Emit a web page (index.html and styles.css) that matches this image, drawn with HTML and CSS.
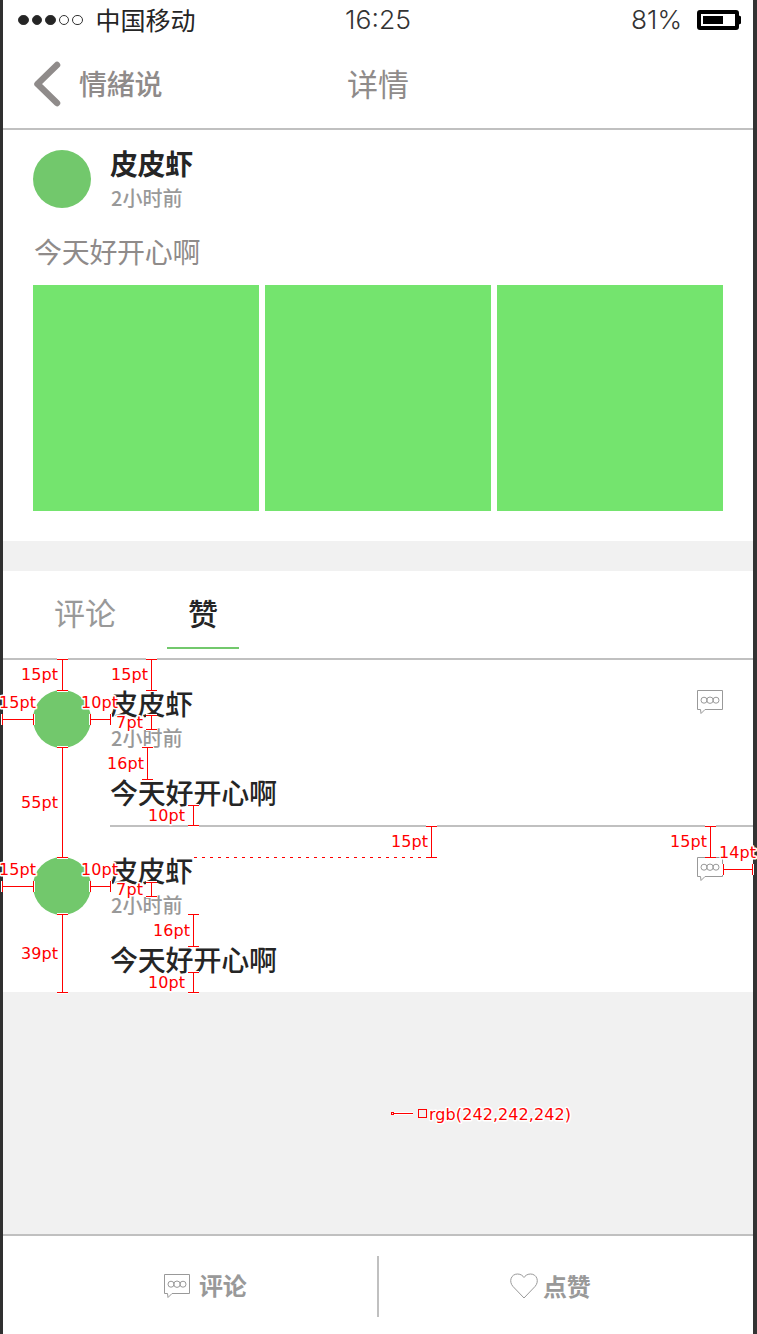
FILE: index.html
```html
<!DOCTYPE html>
<html lang="zh-CN">
<head>
<meta charset="utf-8">
<title>详情</title>
<link rel="stylesheet" href="styles.css">
</head>
<body>
<svg class="defs" aria-hidden="true">
  <defs>
    <symbol id="chat" viewBox="0 0 28 26">
      <path d="M1.500 1.500H26.500V20.500H9L5 24.500L4.500 20.500H1.500Z" fill="none" stroke="currentColor"/>
      <g fill="none" stroke="currentColor"><circle cx="8" cy="11.200" r="3"/><circle cx="14" cy="11.200" r="3.200"/><circle cx="20" cy="11.200" r="3"/></g>
    </symbol>
  </defs>
</svg>
<div class="phone">
  <header class="status">
    <div class="signal"><i class="on"></i><i class="on"></i><i class="on"></i><i></i><i></i><span class="carrier">中国移动</span></div>
    <div class="clock"><svg width="68" height="40"><text x="1" y="29" textLength="66" lengthAdjust="spacingAndGlyphs">16:25</text></svg></div>
    <div class="power">
      <svg width="52" height="40"><text x="0" y="29" textLength="51" lengthAdjust="spacingAndGlyphs">81%</text></svg>
      <svg class="battery" width="44" height="20"><rect x="2" y="2" width="38" height="16" rx="1" fill="#fff" stroke="#000" stroke-width="4"/><path d="M40 4.500L44 6.500V13.500L40 15.500Z"/><rect x="6" y="6" width="20" height="8"/></svg>
    </div>
  </header>
  <nav class="nav">
    <div class="back"><svg width="28" height="46"><path d="M24 4L4.500 23L24 42" fill="none" stroke="currentColor" stroke-width="6.500" stroke-linecap="round" stroke-linejoin="round"/></svg><span>情緒说</span></div>
    <h1>详情</h1>
  </nav>
  <section class="post">
    <div class="author">
      <div class="avatar"></div>
      <div class="meta"><div class="name strong">皮皮虾</div><div class="time">2小时前</div></div>
    </div>
    <p class="body">今天好开心啊</p>
    <div class="photos"><div></div><div></div><div></div></div>
  </section>
  <div class="tabs"><div class="tab">评论</div><div class="tab active">赞</div></div>
  <section class="list">
    <article class="item">
      <div class="avatar"></div>
      <div class="content">
        <div class="meta"><div class="name">皮皮虾</div><div class="time">2小时前</div></div>
        <p class="text">今天好开心啊</p>
        <svg class="reply" width="28" height="26"><use href="#chat"/></svg>
      </div>
    </article>
    <article class="item">
      <div class="avatar"></div>
      <div class="content">
        <div class="meta"><div class="name">皮皮虾</div><div class="time">2小时前</div></div>
        <p class="text">今天好开心啊</p>
        <svg class="reply" width="28" height="26"><use href="#chat"/></svg>
      </div>
    </article>
  </section>
  <footer class="footer">
    <div class="action"><svg width="28" height="26"><use href="#chat"/></svg><span>评论</span></div>
    <div class="divider"></div>
    <div class="action like"><svg width="28" height="26"><path d="M14 25L3 13.500C-1.500 8.500 1 1 7.500 1C11 1 13 3 14 4.500C15 3 17 1 20.500 1C27 1 29.500 8.500 25 13.500Z" fill="none" stroke="currentColor"/></svg><span>点赞</span></div>
  </footer>
</div>
<svg class="specs" width="757" height="1334">
  <defs>
    <path id="rules" d="M57 659.500H68M62.500 659V690M57 690.500H68M146 659.500H157M151.500 659V690M146 690.500H157
      M2.500 714V725M2 719.500H34M33.500 714V725M90.500 714V725M90 719.500H111M110.500 714V725
      M146 715.500H157M151.500 715V730M146 729.500H157
      M57 747.500H68M62.500 747V857M57 857.500H68M142 747.500H153M147.500 747V779M142 779.500H153
      M188 805.500H199M193.500 805V825M188 825.500H199
      M426 826.500H437M431.500 826V857M426 857.500H437M705 826.500H716M710.500 826V857M705 857.500H716
      M723.500 864V875M723 869.500H753M752.500 864V875
      M2.500 881V892M2 886.500H34M33.500 881V892M90.500 881V892M90 886.500H111M110.500 881V892
      M146 882.500H157M151.500 882V897M146 896.500H157
      M57 914.500H68M62.500 914V992M57 992.500H68M188 914.500H199M193.500 914V946M188 946.500H199
      M188 972.500H199M193.500 972V992M188 992.500H199M393 1113.500H413"/>
  </defs>
  <use href="#rules" class="halo"/>
  <use href="#rules" class="rule"/>
  <path class="dash" d="M194 857.500H427"/>
  <rect class="box" x="391.500" y="1112.500" width="2" height="2"/>
  <rect class="box" x="418.500" y="1109.500" width="8" height="8"/>
  <g class="labels">
    <text x="21" y="680" textLength="37">15pt</text><text x="111" y="680" textLength="37">15pt</text>
    <text x="-1" y="708" textLength="37">15pt</text><text x="81" y="708" textLength="37">10pt</text>
    <text x="116" y="728" textLength="27">7pt</text><text x="107" y="769" textLength="37">16pt</text>
    <text x="21" y="808" textLength="37">55pt</text><text x="148" y="821" textLength="37">10pt</text>
    <text x="391" y="847" textLength="37">15pt</text><text x="670" y="847" textLength="37">15pt</text>
    <text x="719" y="858" textLength="37">14pt</text>
    <text x="-1" y="875" textLength="37">15pt</text><text x="81" y="875" textLength="37">10pt</text>
    <text x="116" y="895" textLength="27">7pt</text><text x="153" y="936" textLength="37">16pt</text>
    <text x="21" y="959" textLength="37">39pt</text><text x="148" y="988" textLength="37">10pt</text>
    <text x="429" y="1120" textLength="142">rgb(242,242,242)</text>
  </g>
</svg>
</body>
</html>
```
FILE: styles.css
```css
* { box-sizing: border-box; }
body {
  margin: 0;
  position: relative;
  width: 757px;
  height: 1334px;
  overflow: hidden;
  font-family: "Noto Sans CJK SC", sans-serif;
  color: #252525;
}
h1, p { margin: 0; font-weight: 400; }
svg { display: block; flex: none; }
.defs { position: absolute; width: 0; height: 0; }
.phone {
  width: 757px;
  height: 1334px;
  border-left: 3px solid #303030;
  border-right: 4px solid #333;
  background: #f1f1f1;
  display: flex;
  flex-direction: column;
}
.status {
  height: 40px;
  background: #fff;
  display: grid;
  grid-template-columns: 1fr 68px 1fr;
  align-items: center;
}
.status text { font: 300 26px Inter, sans-serif; fill: #333; }
.signal { display: flex; align-items: center; gap: 3px; padding-left: 15px; }
.signal i { width: 10.5px; height: 10.5px; border-radius: 50%; border: 1px solid #333; }
.signal .on { background: #252525; }
.carrier { font-size: 25px; line-height: 38px; height: 40px; margin-left: 10px; }
.power { display: flex; align-items: center; justify-content: flex-end; gap: 14px; padding-right: 12px; }
.nav {
  height: 90px;
  background: #fff;
  border-bottom: 2px solid #c0c0c0;
  color: #8f8b8a;
  display: grid;
  grid-template-columns: 1fr auto 1fr;
  align-items: center;
}
.back { display: flex; align-items: center; gap: 18px; padding-left: 30px; font-size: 28px; font-weight: 500; letter-spacing: -0.3px; }
.back span { padding-bottom: 2px; }
.nav h1 { font-size: 31px; line-height: 85px; height: 88px; }
.post { height: 411px; background: #fff; padding: 20px 30px 0; }
.author { display: flex; gap: 19px; height: 58px; }
.avatar { width: 58px; height: 58px; border-radius: 50%; background: #72c86c; flex: none; }
.name { font-size: 28px; line-height: 28px; font-weight: 500; letter-spacing: -0.4px; }
.strong { font-weight: 700; line-height: 26px; }
.time { font-size: 20px; line-height: 24px; margin-top: 9px; padding-left: 1px; color: #999; font-weight: 500; }
.strong + .time { margin-top: 10px; }
.body { margin-top: 23px; padding-left: 1px; font-size: 28px; line-height: 41px; height: 40px; color: #8f8b8a; letter-spacing: -0.3px; }
.photos { display: grid; grid-template-columns: repeat(3, 226px); gap: 6px; margin-top: 14px; }
.photos div { height: 226px; background: #74e46e; }
.tabs {
  margin-top: 30px;
  height: 89px;
  background: #fff;
  border-bottom: 2px solid #c0c0c0;
  display: flex;
  padding-left: 46px;
  gap: 46px;
}
.tab { width: 72px; height: 78px; line-height: 82px; font-size: 31px; text-align: center; color: #999; }
.active { font-size: 30px; font-weight: 500; color: #252525; border-bottom: 2px solid #72c86c; }
.list { background: #fff; }
.item { display: flex; gap: 19px; padding-left: 30px; }
.item .avatar { margin-top: 30px; }
.item .content {
  flex: 1;
  height: 165px;
  display: grid;
  grid-template-columns: 1fr auto;
  grid-template-rows: 87px auto;
  padding: 29px 29px 0 0;
}
.item:first-child .content { height: 167px; border-bottom: 2px solid #c0c0c0; }
.reply { grid-area: 1 / 2; color: #999; }
.text { font-size: 28px; line-height: 32px; font-weight: 500; letter-spacing: -0.2px; }
.footer {
  margin-top: auto;
  height: 100px;
  background: #fff;
  border-top: 2px solid #c0c0c0;
  display: grid;
  grid-template-columns: 374px 2px 374px;
}
.divider { background: #c0c0c0; height: 61px; margin-top: 20px; }
.action { display: flex; align-items: center; padding-left: 160px; gap: 8px; color: #999; font-size: 24px; font-weight: 700; letter-spacing: -0.3px; height: 100px; }
.action span { padding-bottom: 4px; }
.action.like { padding-left: 131px; gap: 5px; }
.action.like span { padding-bottom: 2px; }
.specs { position: absolute; left: 0; top: 0; }
.halo { fill: none; stroke: #fff; stroke-width: 3; }
.rule, .dash, .box { fill: none; stroke: #f00; stroke-width: 1; shape-rendering: crispEdges; }
.dash { stroke-dasharray: 3 5; }
.labels text {
  font: 16px "DejaVu Sans", sans-serif;
  fill: #f00;
  stroke: #fff;
  stroke-width: 3px;
  stroke-linejoin: round;
  paint-order: stroke;
}
```
